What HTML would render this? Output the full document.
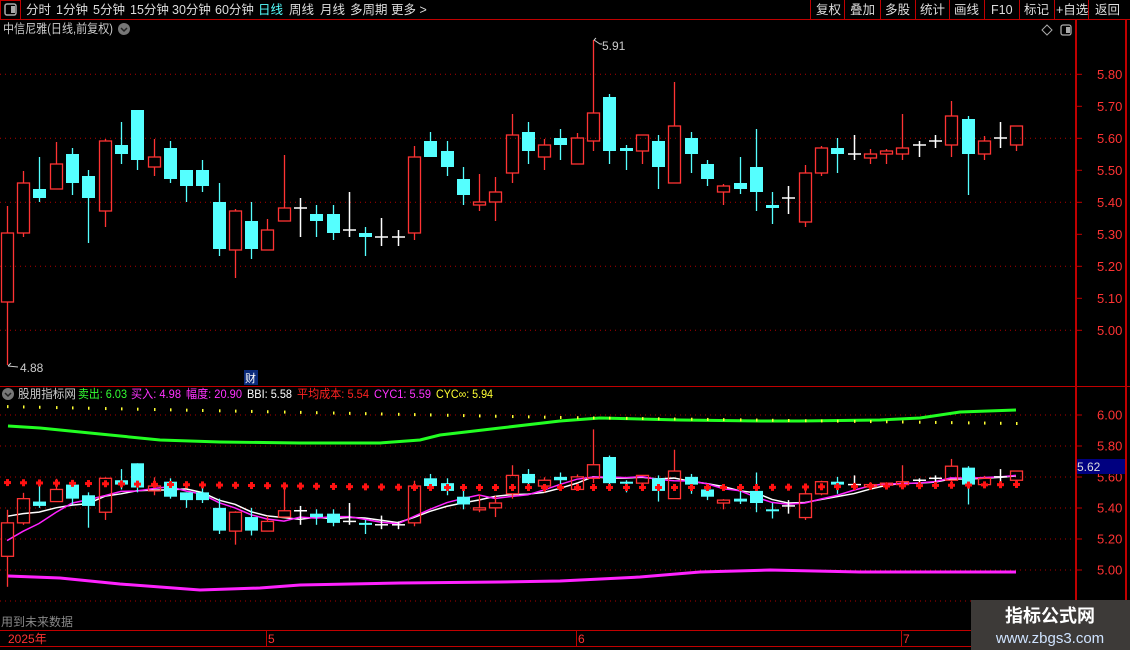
<!DOCTYPE html>
<html><head><meta charset="utf-8"><style>
html,body{margin:0;padding:0;background:#000;width:1130px;height:650px;overflow:hidden;font-family:"Liberation Sans","Noto Sans CJK SC",sans-serif;}
svg text{font-family:"Liberation Sans","Noto Sans CJK SC",sans-serif;}
</style></head><body>
<svg id="s" width="1130" height="650" xmlns="http://www.w3.org/2000/svg" style="position:absolute;left:0;top:0">
<rect width="1130" height="650" fill="#000"/>
<line x1="0" y1="19.5" x2="1130" y2="19.5" stroke="#c00000"/>
<rect x="0.5" y="0.5" width="20" height="19" fill="none" stroke="#c00000"/>
<rect x="5" y="4" width="11" height="11" rx="2" fill="none" stroke="#aaa" stroke-width="1.5"/>
<rect x="11" y="6" width="4" height="7" fill="#aaa"/>
<g font-size="12.5" fill="#ddd">
<text x="26" y="14">分时</text><text x="56" y="14">1分钟</text><text x="93" y="14">5分钟</text>
<text x="130" y="14">15分钟</text><text x="172" y="14">30分钟</text><text x="215" y="14">60分钟</text>
<text x="258" y="14" fill="#55ffff">日线</text><text x="289" y="14">周线</text><text x="320" y="14">月线</text>
<text x="350" y="14">多周期</text><text x="391" y="14">更多 &gt;</text>
<text x="816" y="14">复权</text><text x="850" y="14">叠加</text><text x="885" y="14">多股</text>
<text x="920" y="14">统计</text><text x="954" y="14">画线</text><text x="991" y="14">F10</text>
<text x="1024" y="14">标记</text><text x="1056" y="14">+自选</text><text x="1095" y="14">返回</text>
</g>
<g stroke="#c00000"><line x1="810.5" y1="0" x2="810.5" y2="19"/><line x1="844.5" y1="0" x2="844.5" y2="19"/><line x1="880.5" y1="0" x2="880.5" y2="19"/><line x1="915.5" y1="0" x2="915.5" y2="19"/><line x1="949.5" y1="0" x2="949.5" y2="19"/><line x1="984.5" y1="0" x2="984.5" y2="19"/><line x1="1019.5" y1="0" x2="1019.5" y2="19"/><line x1="1054.5" y1="0" x2="1054.5" y2="19"/><line x1="1088.5" y1="0" x2="1088.5" y2="19"/></g>
<text x="3" y="33" font-size="12.5" fill="#ccc" textLength="110" lengthAdjust="spacingAndGlyphs">中信尼雅(日线,前复权)</text>
<circle cx="124" cy="29" r="6" fill="#777"/><path d="M121 28 L124 31 L127 28" stroke="#222" stroke-width="1.5" fill="none"/>
<path d="M1047 25 L1052 30 L1047 35 L1042 30 Z" fill="none" stroke="#aaa"/>
<rect x="1061" y="25" width="10" height="10" rx="2" fill="none" stroke="#aaa" stroke-width="1.3"/><rect x="1066" y="27" width="4" height="6" fill="#aaa"/>
<line x1="1076" y1="19" x2="1076" y2="646" stroke="#c00000" stroke-width="2"/>
<line x1="1126" y1="19" x2="1126" y2="646" stroke="#c00000" stroke-width="2"/>
<line x1="0" y1="386.5" x2="1130" y2="386.5" stroke="#c00000"/>
<line x1="0" y1="630.5" x2="1076" y2="630.5" stroke="#c00000"/>
<line x1="0" y1="646.5" x2="1076" y2="646.5" stroke="#c00000"/>
<line x1="266.5" y1="630" x2="266.5" y2="646" stroke="#c00000"/>
<line x1="576.5" y1="630" x2="576.5" y2="646" stroke="#c00000"/>
<line x1="901.5" y1="630" x2="901.5" y2="646" stroke="#c00000"/>
<g font-size="12" fill="#ff3333"><text x="8" y="643">2025年</text><text x="268" y="643">5</text><text x="578" y="643">6</text><text x="903" y="643">7</text></g>
<text x="1" y="626" font-size="12" fill="#888">用到未来数据</text>
<g id="grid"></g>
<g id="axis" font-size="13" fill="#ff3333"></g>
<circle cx="8" cy="394" r="6" fill="#777"/><path d="M5 393 L8 396 L11 393" stroke="#222" stroke-width="1.5" fill="none"/>
<g font-size="12" lengthAdjust="spacingAndGlyphs">
<text x="18" y="398" fill="#ccc" textLength="58" lengthAdjust="spacingAndGlyphs">股朋指标网</text>
<text x="78" y="398" fill="#33ff33" textLength="49" lengthAdjust="spacingAndGlyphs">卖出: 6.03</text>
<text x="131" y="398" fill="#ff33ff" textLength="50" lengthAdjust="spacingAndGlyphs">买入: 4.98</text>
<text x="186" y="398" fill="#ff33ff" textLength="56" lengthAdjust="spacingAndGlyphs">幅度: 20.90</text>
<text x="247" y="398" fill="#fff" textLength="45" lengthAdjust="spacingAndGlyphs">BBI: 5.58</text>
<text x="297" y="398" fill="#ff2222" textLength="72" lengthAdjust="spacingAndGlyphs">平均成本: 5.54</text>
<text x="374" y="398" fill="#ff33ff" textLength="57" lengthAdjust="spacingAndGlyphs">CYC1: 5.59</text>
<text x="436" y="398" fill="#ffff33" textLength="57" lengthAdjust="spacingAndGlyphs">CYC∞: 5.94</text>
</g>
<rect x="244" y="370" width="14" height="15" fill="#0a2a7a"/><text x="245" y="382" font-size="11" fill="#fff">财</text>
<g id="chart"></g>
<text x="602" y="50" font-size="12" fill="#ccc">5.91</text>
<path d="M594 40 L596 38 M594 40 L600 44 L602 44" stroke="#ccc" fill="none"/>
<text x="20" y="372" font-size="12" fill="#ccc">4.88</text>
<path d="M8 366 L18 367 M8 366 L11 363" stroke="#ccc" fill="none"/>
<rect x="1077" y="459" width="48" height="15" fill="#000080"/>
<text x="1077" y="471" font-size="12" fill="#ddd">5.62</text>
<rect x="971" y="600" width="159" height="50" fill="#3d3a38"/>
<text x="1050" y="622" font-size="18" font-weight="bold" fill="#fff" text-anchor="middle">指标公式网</text>
<text x="1050" y="643" font-size="15" fill="#cfe3ff" text-anchor="middle">www.zbgs3.com</text>
</svg>
<script>
var NS="http://www.w3.org/2000/svg";
function el(p,t,a){var e=document.createElementNS(NS,t);for(var k in a)e.setAttribute(k,a[k]);p.appendChild(e);return e;}
var grid=document.getElementById('grid'),axis=document.getElementById('axis'),ch=document.getElementById('chart');
function ty(p){return 138.3-(p-5.6)*320;}
function ly(p){return 477-(p-5.6)*155;}
[5.8,5.6,5.4,5.2,5.0].forEach(function(p){el(grid,'line',{x1:0,x2:1076,y1:ty(p),y2:ty(p),stroke:'#b00000','stroke-dasharray':'1 4'});});
[5.8,5.7,5.6,5.5,5.4,5.3,5.2,5.1,5.0].forEach(function(p){var y=ty(p);el(axis,'line',{x1:1076,x2:1082,y1:y,y2:y,stroke:'#c00000'});var t=el(axis,'text',{x:1097,y:y+4.5});t.textContent=p.toFixed(2);});
[6.0,5.8,5.6,5.4,5.2,5.0,4.8].forEach(function(p){el(grid,'line',{x1:0,x2:1076,y1:ly(p),y2:ly(p),stroke:'#b00000','stroke-dasharray':'1 4'});});
[6.0,5.8,5.6,5.4,5.2,5.0].forEach(function(p){var y=ly(p);el(axis,'line',{x1:1076,x2:1082,y1:y,y2:y,stroke:'#c00000'});var t=el(axis,'text',{x:1097,y:y+4.5});t.textContent=p.toFixed(2);});
var C=[[7,233,302,206,365,'r'],[23,183,233,171,237,'r'],[39,189,198,157,202,'c'],[56,164,189,142,189,'r'],[72,154,183,148,195,'c'],[88,176,198,170,243,'c'],[105,141,211,139,227,'r'],[121,145,154,122,164,'c'],[137,110,160,110,170,'c'],[154,157,167,139,176,'r'],[170,148,179,141,183,'c'],[186,170,186,170,202,'c'],[202,170,186,160,192,'c'],[219,202,249,183,256,'c'],[235,211,250,209,278,'r'],[251,221,249,202,259,'c'],[267,230,250,219,250,'r'],[284,208,221,155,221,'r'],[300,208,208,198,237,'w'],[316,214,221,205,237,'c'],[333,214,233,205,240,'c'],[349,230,230,192,237,'w'],[365,233,237,227,256,'c'],[381,237,237,218,246,'w'],[398,237,237,230,246,'w'],[414,157,233,146,240,'r'],[430,141,157,132,157,'c'],[447,151,167,141,176,'c'],[463,179,195,167,205,'c'],[479,202,205,174,211,'r'],[495,192,202,177,221,'r'],[512,135,173,114,183,'r'],[528,132,151,122,164,'c'],[544,145,157,139,170,'r'],[560,138,145,129,160,'c'],[577,138,164,133,164,'r'],[593,113,141,40,151,'r'],[609,97,151,94,164,'c'],[626,148,151,145,170,'c'],[642,135,151,135,164,'r'],[658,141,167,135,189,'c'],[674,126,183,82,183,'r'],[691,138,154,132,173,'c'],[707,164,179,160,186,'c'],[723,186,192,184,205,'r'],[740,183,189,157,194,'c'],[756,167,192,129,211,'c'],[772,205,208,192,224,'c'],[788,198,198,186,214,'w'],[805,173,222,165,227,'r'],[821,148,173,146,176,'r'],[837,148,154,138,173,'c'],[854,154,154,135,160,'w'],[870,154,158,149,164,'r'],[886,151,154,149,164,'r'],[902,148,154,114,160,'r'],[919,145,145,141,157,'w'],[935,141,141,135,148,'w'],[951,116,145,101,157,'r'],[968,119,154,116,195,'c'],[984,141,154,136,160,'r'],[1000,138,138,122,148,'w'],[1016,126,145,126,151,'r']];
function L(y){return 477+(y-138.3)*0.4844;}
function draw(f){C.forEach(function(c){var x=c[0],t=f(c[1]),b=f(c[2]),h=f(c[3]),l=f(c[4]),k=c[5];
 var col=k=='r'?'#ff3333':(k=='c'?'#55ffff':'#ffffff');
 if(k=='w'){el(ch,'line',{x1:x+.5,x2:x+.5,y1:h,y2:l,stroke:col,'stroke-width':1.5});el(ch,'line',{x1:x-6,x2:x+7,y1:t,y2:t,stroke:col,'stroke-width':1.5});return;}
 if(k=='c'){el(ch,'line',{x1:x+.5,x2:x+.5,y1:h,y2:l,stroke:col,'stroke-width':1.3});el(ch,'rect',{x:x-6,y:t,width:13,height:Math.max(b-t,2),fill:col});}
 else{el(ch,'line',{x1:x+.5,x2:x+.5,y1:h,y2:t,stroke:col,'stroke-width':1.3});el(ch,'line',{x1:x+.5,x2:x+.5,y1:b,y2:l,stroke:col,'stroke-width':1.3});el(ch,'rect',{x:x-5.5,y:t,width:12,height:Math.max(b-t,2),fill:'none',stroke:col,'stroke-width':1.3});}
});}
draw(function(y){return y;});
function pl(pts,col,w){el(ch,'polyline',{points:pts.map(function(p){return p.join(',');}).join(' '),fill:'none',stroke:col,'stroke-width':w});}
pl([[8,426],[40,428],[100,434],[160,440],[220,442],[300,443],[380,443],[420,440],[440,435],[500,428],[560,421],[600,418],[680,420],[760,421],[800,421],[880,420],[920,418],[960,412],[1016,410]],'#22ff22',3);
pl([[8,576],[60,578],[120,584],[200,590],[260,588],[300,585],[400,583],[500,582],[560,581],[640,577],[700,572],[770,570],[860,572],[1016,572]],'#ff22ff',3);
C.forEach(function(c,i){var x=c[0];var yy=405+Math.min(x,560)/560*11+(x>560?(x-560)/456*6:0);
 el(ch,'rect',{x:x,y:yy,width:1.5,height:3,fill:'#ffff33'});});
var cl=C.map(function(c){var k=c[5];var top=L(c[1]),bot=L(c[2]);return k=='c'?bot:top;});
function ma(n,start){var r=[];for(var i=0;i<cl.length;i++){var s=0,m=0;for(var j=Math.max(0,i-n+1);j<=i;j++){s+=cl[j];m++;}var v=s/m;if(i<n){v=(start*(n-1-i)+s)/(n-1-i+m);}r.push([C[i][0],v]);}return r;}
pl(ma(6,515),'#ffffff',1.5);
pl(ma(5,545),'#ff22ff',1.5);
draw(L);
C.forEach(function(c){var x=c[0];var yy=x<420?482+x/420*5:(x<760?487:487-(x-760)/256*3);
 el(ch,'rect',{x:x-3,y:yy-1,width:7,height:3,fill:'#ff1111'});el(ch,'rect',{x:x-1,y:yy-3,width:3,height:7,fill:'#ff1111'});});
</script>
</body></html>
